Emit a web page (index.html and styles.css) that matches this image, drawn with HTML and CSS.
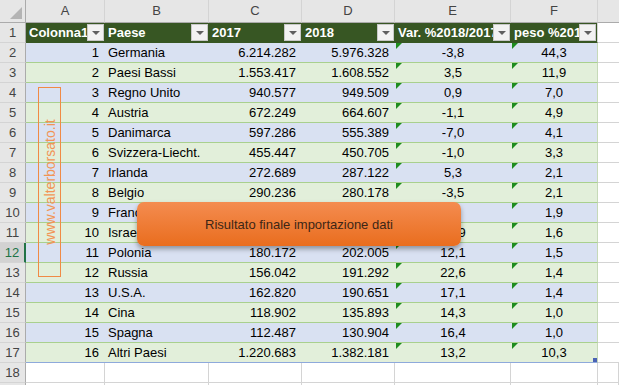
FILE: index.html
```html
<!DOCTYPE html>
<html lang="it">
<head>
  <meta charset="UTF-8">
  <title>Importazione dati</title>
  <link rel="stylesheet" href="styles.css">
</head>
<body>
  <div class="sheet">
    <table class="grid">
      <colgroup>
        <col class="w-hd"><col class="w-a"><col class="w-b"><col class="w-c"><col class="w-d"><col class="w-e"><col class="w-f"><col class="w-g">
      </colgroup>
      <thead>
        <tr class="letters">
          <th class="corner"></th><th>A</th><th>B</th><th>C</th><th>D</th><th>E</th><th>F</th><th class="last"></th>
        </tr>
      </thead>
      <tbody>
        <tr class="head">
          <th class="rn">1</th>
          <td>Colonna1<span class="dd"></span></td>
          <td>Paese<span class="dd"></span></td>
          <td>2017<span class="dd"></span></td>
          <td>2018<span class="dd"></span></td>
          <td>Var. %2018/2017<span class="dd"></span></td>
          <td class="edge">peso %2018<span class="dd"></span></td>
          <td class="out"></td>
        </tr>
        <tr class="blue"><th class="rn">2</th><td class="num">1</td><td class="txt">Germania</td><td class="num">6.214.282</td><td class="num">5.976.328</td><td class="mid tx">-3,8</td><td class="mid tx edge">44,3</td><td class="out"></td></tr>
        <tr class="green"><th class="rn">3</th><td class="num">2</td><td class="txt">Paesi Bassi</td><td class="num">1.553.417</td><td class="num">1.608.552</td><td class="mid tx">3,5</td><td class="mid tx edge">11,9</td><td class="out"></td></tr>
        <tr class="blue"><th class="rn">4</th><td class="num">3</td><td class="txt">Regno Unito</td><td class="num">940.577</td><td class="num">949.509</td><td class="mid tx">0,9</td><td class="mid tx edge">7,0</td><td class="out"></td></tr>
        <tr class="green"><th class="rn">5</th><td class="num">4</td><td class="txt">Austria</td><td class="num">672.249</td><td class="num">664.607</td><td class="mid tx">-1,1</td><td class="mid tx edge">4,9</td><td class="out"></td></tr>
        <tr class="blue"><th class="rn">6</th><td class="num">5</td><td class="txt">Danimarca</td><td class="num">597.286</td><td class="num">555.389</td><td class="mid tx">-7,0</td><td class="mid tx edge">4,1</td><td class="out"></td></tr>
        <tr class="green"><th class="rn">7</th><td class="num">6</td><td class="txt">Svizzera-Liecht.</td><td class="num">455.447</td><td class="num">450.705</td><td class="mid tx">-1,0</td><td class="mid tx edge">3,3</td><td class="out"></td></tr>
        <tr class="blue"><th class="rn">8</th><td class="num">7</td><td class="txt">Irlanda</td><td class="num">272.689</td><td class="num">287.122</td><td class="mid tx">5,3</td><td class="mid tx edge">2,1</td><td class="out"></td></tr>
        <tr class="green"><th class="rn">9</th><td class="num">8</td><td class="txt">Belgio</td><td class="num">290.236</td><td class="num">280.178</td><td class="mid tx">-3,5</td><td class="mid tx edge">2,1</td><td class="out"></td></tr>
        <tr class="blue"><th class="rn">10</th><td class="num">9</td><td class="txt">Francia</td><td class="num"></td><td class="num"></td><td class="mid tx"></td><td class="mid tx edge">1,9</td><td class="out"></td></tr>
        <tr class="green"><th class="rn">11</th><td class="num">10</td><td class="txt">Israele</td><td class="num"></td><td class="num"></td><td class="mid tx">10,9</td><td class="mid tx edge">1,6</td><td class="out"></td></tr>
        <tr class="blue"><th class="rn active">12</th><td class="num">11</td><td class="txt">Polonia</td><td class="num">180.172</td><td class="num">202.005</td><td class="mid tx">12,1</td><td class="mid tx edge">1,5</td><td class="out"></td></tr>
        <tr class="green"><th class="rn">13</th><td class="num">12</td><td class="txt">Russia</td><td class="num">156.042</td><td class="num">191.292</td><td class="mid tx">22,6</td><td class="mid tx edge">1,4</td><td class="out"></td></tr>
        <tr class="blue"><th class="rn">14</th><td class="num">13</td><td class="txt">U.S.A.</td><td class="num">162.820</td><td class="num">190.651</td><td class="mid tx">17,1</td><td class="mid tx edge">1,4</td><td class="out"></td></tr>
        <tr class="green"><th class="rn">15</th><td class="num">14</td><td class="txt">Cina</td><td class="num">118.902</td><td class="num">135.893</td><td class="mid tx">14,3</td><td class="mid tx edge">1,0</td><td class="out"></td></tr>
        <tr class="blue"><th class="rn">16</th><td class="num">15</td><td class="txt">Spagna</td><td class="num">112.487</td><td class="num">130.904</td><td class="mid tx">16,4</td><td class="mid tx edge">1,0</td><td class="out"></td></tr>
        <tr class="green lastrow"><th class="rn">17</th><td class="num">16</td><td class="txt">Altri Paesi</td><td class="num">1.220.683</td><td class="num">1.382.181</td><td class="mid tx">13,2</td><td class="mid tx edge">10,3<span class="grip"></span></td><td class="out"></td></tr>
        <tr class="empty"><th class="rn">18</th><td></td><td></td><td></td><td></td><td></td><td></td><td></td></tr>
        <tr class="empty"><th class="rn"></th><td></td><td></td><td></td><td></td><td></td><td></td><td></td></tr>
      </tbody>
    </table>

    <div class="watermark"><span>www.valterborsato.it</span></div>
    <div class="callout">Risultato finale importazione dati</div>
  </div>
</body>
</html>
```

FILE: styles.css
```css
* { box-sizing: border-box; margin: 0; padding: 0; }
body {
  font-family: 'Liberation Sans', Arial, sans-serif;
  font-size: 13px;
  color: #000;
  background: #fff;
  overflow: hidden;
}
.sheet {
  position: relative;
  width: 619px;
  height: 385px;
  overflow: hidden;
}
.grid {
  border-collapse: separate;
  border-spacing: 0;
  table-layout: fixed;
  width: 619px;
}
.w-hd { width: 26px; }
.w-a { width: 79px; }
.w-b { width: 104px; }
.w-c { width: 93px; }
.w-d { width: 93px; }
.w-e { width: 116px; }
.w-f { width: 87px; }
.w-g { width: 21px; }

td, th {
  height: 20px;
  line-height: 19px;
  padding: 0;
  border-bottom: 1px solid #a9d08e;
  white-space: nowrap;
  overflow: hidden;
  font-weight: normal;
}

/* column letters */
.letters th {
  height: 23px;
  line-height: 22px;
  background: #e6e6e6;
  color: #444;
  text-align: center;
  border-bottom: 1px solid #ababab;
  border-right: 1px solid #d4d4d4;
}
.letters .corner {
  position: relative;
  border-right: 1px solid #ababab;
}
.letters .corner::after {
  content: "";
  position: absolute;
  right: 3px;
  bottom: 3px;
  border-style: solid;
  border-width: 0 0 12px 12px;
  border-color: transparent transparent #b4b4b4 transparent;
}
.letters .last { border-right: none; }

/* row numbers */
.rn {
  background: #e6e6e6;
  color: #444;
  text-align: center;
  border-right: 1px solid #ababab;
  border-bottom: 1px solid #d4d4d4;
}
.rn.active {
  background: #d2d2d2;
  color: #217346;
  border-right: 2px solid #217346;
}

/* table header row */
.head td {
  position: relative;
  background: #375623;
  color: #fff;
  font-weight: bold;
  padding-left: 3px;
  border-bottom: 1px solid #375623;
}
.head td.out {
  background: #fff;
  border-bottom: 1px solid #d4d4d4;
}
.dd {
  position: absolute;
  right: 1px;
  top: 1px;
  width: 17px;
  height: 17px;
  background: #f2f2f2;
  border: 1px solid #c8c8c8;
}
.dd::after {
  content: "";
  position: absolute;
  left: 4px;
  top: 6px;
  border-style: solid;
  border-width: 4px 4px 0 4px;
  border-color: #606060 transparent transparent transparent;
}

/* banded rows */
.blue td { background: #d9e1f2; }
.green td { background: #e2efda; }
.blue td.out, .green td.out {
  background: #fff;
  border-bottom: 1px solid #d4d4d4;
}
.lastrow td { border-bottom: 1px solid #8ea9db; }
.edge { border-right: 1px solid #c6d9b8; }
.head .edge { border-right: 1px solid #d4d4d4; }

.num { text-align: right; padding-right: 6px; }
.txt { text-align: left; padding-left: 3px; }
.mid { text-align: center; }
.tx { position: relative; }
.tx::before {
  content: "";
  position: absolute;
  left: 1px;
  top: 0;
  border-style: solid;
  border-width: 6px 6px 0 0;
  border-color: #1e8c1e transparent transparent transparent;
}
.grip {
  position: absolute;
  right: 0;
  bottom: 0;
  width: 4px;
  height: 4px;
  background: #4a62b5;
}
.lastrow .edge { position: relative; }

/* empty cells */
.empty td {
  background: #fff;
  border-bottom: 1px solid #d4d4d4;
  border-right: 1px solid #d4d4d4;
}

/* overlays */
.watermark {
  position: absolute;
  left: 38px;
  top: 87px;
  width: 23px;
  height: 190px;
  border: 1.5px solid #f08a45;
  display: flex;
  align-items: center;
  justify-content: center;
}
.watermark span {
  transform: rotate(-90deg);
  white-space: nowrap;
  color: #f29455;
  font-size: 14px;
}
.callout {
  position: absolute;
  left: 137px;
  top: 202px;
  width: 324px;
  height: 44px;
  border-radius: 7px;
  background: linear-gradient(#f48c50, #e96d1e);
  box-shadow: 0 3px 5px rgba(0, 0, 0, 0.35);
  color: #3d2616;
  display: flex;
  align-items: center;
  justify-content: center;
  font-size: 13px;
}
```
